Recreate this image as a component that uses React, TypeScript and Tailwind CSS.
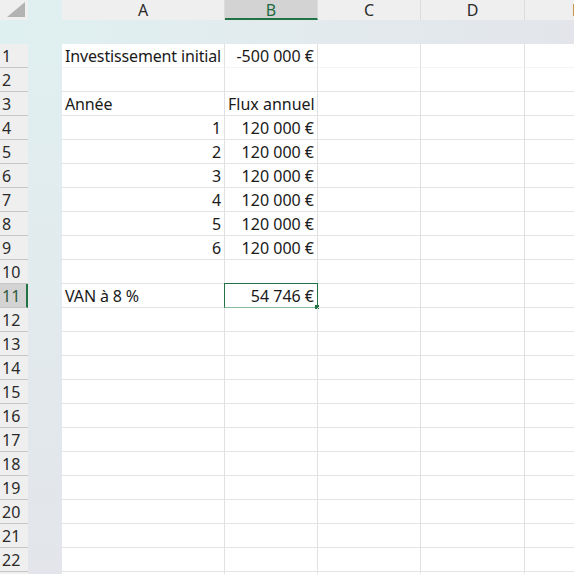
type Cell = { text: string; align?: "left" | "right" };

const cols = [
  { key: "A", w: "w-[163px]" },
  { key: "B", w: "w-[93px]" },
  { key: "C", w: "w-[103px]" },
  { key: "D", w: "w-[104px]" },
  { key: "E", w: "w-[104px]" },
];

const data: Record<number, [Cell | null, Cell | null]> = {
  1: [{ text: "Investissement initial" }, { text: "-500 000 €", align: "right" }],
  3: [{ text: "Année" }, { text: "Flux annuel" }],
  4: [{ text: "1", align: "right" }, { text: "120 000 €", align: "right" }],
  5: [{ text: "2", align: "right" }, { text: "120 000 €", align: "right" }],
  6: [{ text: "3", align: "right" }, { text: "120 000 €", align: "right" }],
  7: [{ text: "4", align: "right" }, { text: "120 000 €", align: "right" }],
  8: [{ text: "5", align: "right" }, { text: "120 000 €", align: "right" }],
  9: [{ text: "6", align: "right" }, { text: "120 000 €", align: "right" }],
  11: [{ text: "VAN à 8 %" }, { text: "54 746 €", align: "right" }],
};

const rowNums = Array.from({ length: 23 }, (_, i) => i + 1);

export default function App() {
  return (
    <div
      className="w-[574px] h-[574px] overflow-hidden bg-white text-[16px] text-[#1a1a1a] flex flex-col"
      style={{ fontFamily: "'Noto Sans', 'Liberation Sans', sans-serif" }}
    >
      {/* Column headers */}
      <div className="flex h-[20px] shrink-0">
        <div className="w-[28px] shrink-0 bg-[#efefef] flex items-end justify-end pr-[2px] pb-[2px]">
          <svg width="20" height="16" viewBox="0 0 20 16">
            <polygon points="19,0 19,15 1,15" fill="#b3b3b3" />
          </svg>
        </div>
        <div className="w-[34px] shrink-0 bg-[#e0f0f0]" />
        {cols.map((c) => (
          <div
            key={c.key}
            className={`${c.w} shrink-0 flex items-center justify-center leading-none border-r border-[#dcdcdc] ${
              c.key === "B"
                ? "bg-[#d3d3d3] text-[#1d6b40] border-b-2 border-b-[#217346] pt-[2px]"
                : "bg-[#efefef] text-[#2b2b2b]"
            }`}
          >
            {c.key}
          </div>
        ))}
      </div>

      {/* Frozen band */}
      <div className="h-[24px] shrink-0 bg-linear-to-r from-[#dff0f0] via-[#e2ebee] to-[#e3e5ea]" />

      {/* Body */}
      <div className="flex flex-1 min-h-0">
        <div className="w-[28px] shrink-0 flex flex-col">
          {rowNums.map((n) => (
            <div
              key={n}
              className={`h-[24px] shrink-0 flex items-center pl-[2px] border-b border-[#c6c6c6] ${
                n === 11
                  ? "bg-[#d3d3d3] text-[#2f5a40] border-r-2 border-r-[#217346]"
                  : "bg-[#efefef] text-[#2b2b2b]"
              }`}
            >
              {n}
            </div>
          ))}
        </div>
        <div className="w-[34px] shrink-0 bg-linear-to-b from-[#e0eff0] to-[#e3e5ea]" />
        <div className="flex flex-col">
          {rowNums.map((n) => {
            const row = data[n];
            return (
              <div key={n} className="flex h-[24px] shrink-0">
                {cols.map((c, ci) => {
                  const cell = row && ci < 2 ? row[ci] : null;
                  const selected = n === 11 && c.key === "B";
                  return (
                    <div
                      key={c.key}
                      className={`${c.w} shrink-0 relative flex items-center px-[3px] whitespace-nowrap border-r border-b ${
                        n === 1 ? "border-b-[#f4f4f4]" : "border-b-[#e3e3e3]"
                      } border-r-[#e1e1e1] ${
                        cell?.align === "right" ? "justify-end" : "justify-start"
                      } ${ci === 0 ? "tracking-[-0.15px]" : ""}`}
                    >
                      {cell?.text}
                      {selected && (
                        <>
                          <div className="absolute -left-px -top-px right-[-1px] bottom-[-1px] border border-[#217346] border-b-[#86b89a]" />
                          <div className="absolute right-[-2px] bottom-[-2px] w-[4px] h-[4px] bg-[#217346]" />
                        </>
                      )}
                    </div>
                  );
                })}
              </div>
            );
          })}
        </div>
      </div>
    </div>
  );
}
